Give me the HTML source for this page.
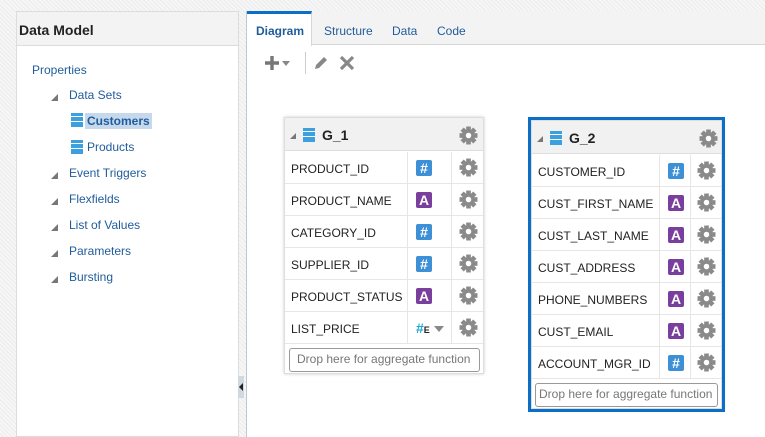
<!DOCTYPE html><html><head><style>
*{box-sizing:border-box;margin:0;padding:0}
body{width:765px;height:437px;overflow:hidden;font-family:"Liberation Sans",sans-serif;font-size:12px;position:relative;background:#f2f2f2;background-image:repeating-linear-gradient(45deg,#f6f6f6 0 2px,#ececec 2px 3px)}
.a{position:absolute}
#left{left:16px;top:11px;width:223px;height:426px;background:#fff;border:1px solid #dcdcdc}
#lh{height:34px;background:#f3f3f3;border-bottom:1px solid #dcdcdc;font-weight:bold;font-size:14px;color:#222;padding:10px 0 0 2px}
.lk{color:#1f5c9b;font-size:12px}
.tri{width:0;height:0;border-left:7px solid transparent;border-bottom:7px solid #777}
.db{width:12px;height:14px;background:linear-gradient(#3ba0de 0 3px,#fff 3px 4px,#3ba0de 4px 8px,#fff 8px 9px,#3ba0de 9px)}
#right{left:246px;top:11px;width:519px;height:426px;background:#fff;border-left:1px solid #b8c8de}
#tabs{height:34px;background:#f3f3f3;border-bottom:1px solid #d6d6d6;position:relative}
.tab{position:absolute;top:13px;color:#1f5c9b;font-size:12px}
.grp{position:absolute;background:#fff;border:1px solid #ddd;box-shadow:0 0 3px #ccc}
.gh{position:absolute;left:0;right:0;top:0;height:33px;background:#f1f1f1;border-bottom:1px solid #ddd}
.gh b{position:absolute;left:37px;top:9px;font-size:14px;color:#222}
.row{position:absolute;left:0;right:0;height:32px;border-bottom:1px solid #e6e6e6}
.row span{position:absolute;left:6px;top:10px;font-size:12px;color:#222}
.c1,.c2{position:absolute;top:0;bottom:0;border-left:1px solid #e6e6e6}
.ic{position:absolute;top:8px;width:16px;height:16px;border-radius:2px;color:#fff;font-weight:bold;font-size:14px;line-height:16px;text-align:center}
.n{background:#3d8fd6}.t{background:#7a3f9d}
.gear{position:absolute;width:19px;height:19px}
.drop{position:absolute;border:1px solid #999;border-radius:3px;color:#777;font-size:12px;padding:3px 0 0 7px;height:24px;white-space:nowrap;overflow:hidden}
</style></head><body>
<svg width="0" height="0" style="position:absolute"><defs><symbol id="g" viewBox="0 0 18 18"><g fill="#8a8a8a"><circle cx="9" cy="9" r="6"/><rect x="6.8" y="0.5" width="4.4" height="17"/><rect x="0.5" y="6.8" width="17" height="4.4"/><rect x="6.8" y="0.5" width="4.4" height="17" transform="rotate(45 9 9)"/><rect x="6.8" y="0.5" width="4.4" height="17" transform="rotate(-45 9 9)"/></g><circle cx="9" cy="9" r="2.6" fill="#fff"/></symbol></defs></svg>
<div id="left" class="a"><div id="lh">Data Model</div>
<div class="a lk" style="left:15px;top:51px">Properties</div>
<div class="a tri" style="left:34px;top:82px"></div><div class="a lk" style="left:52px;top:76px">Data Sets</div>
<div class="a db" style="left:54px;top:101px"></div><div class="a" style="left:68px;top:101px;background:#c6d9ec;color:#1f5c9b;font-weight:bold;padding:1px 2px">Customers</div>
<div class="a db" style="left:54px;top:128px"></div><div class="a lk" style="left:70px;top:128px">Products</div>
<div class="a tri" style="left:34px;top:160px"></div><div class="a lk" style="left:52px;top:154px">Event Triggers</div>
<div class="a tri" style="left:34px;top:186px"></div><div class="a lk" style="left:52px;top:180px">Flexfields</div>
<div class="a tri" style="left:34px;top:212px"></div><div class="a lk" style="left:52px;top:206px">List of Values</div>
<div class="a tri" style="left:34px;top:238px"></div><div class="a lk" style="left:52px;top:232px">Parameters</div>
<div class="a tri" style="left:34px;top:264px"></div><div class="a lk" style="left:52px;top:258px">Bursting</div>
</div>
<div class="a" style="left:238px;top:376px;width:6px;height:22px;background:#d0d8e0"></div>
<div class="a" style="left:239px;top:383px;border-right:4px solid #222;border-top:4px solid transparent;border-bottom:4px solid transparent"></div>
<div id="right" class="a"><div id="tabs">
<div class="a" style="left:0;top:0;width:65px;height:35px;background:#fff;border-top:3px solid #0b6fc7;border-right:1px solid #d6d6d6"></div>
<div class="tab" style="left:9px;font-weight:bold;color:#1f5c9b">Diagram</div>
<div class="tab" style="left:77px">Structure</div><div class="tab" style="left:145px">Data</div><div class="tab" style="left:190px">Code</div></div>
<svg class="a" style="left:17px;top:44px" width="16" height="16"><path d="M8 1 V15 M1 8 H15" stroke="#777" stroke-width="3.4"/></svg>
<div class="a" style="left:35px;top:50px;border-top:5px solid #888;border-left:4px solid transparent;border-right:4px solid transparent"></div>
<div class="a" style="left:58px;top:41px;width:1px;height:22px;background:#ccc"></div>
<svg class="a" style="left:66px;top:44px" width="16" height="16"><path d="M2 14 L3 10 L11 2 L14 5 L6 13 Z" fill="#888"/></svg>
<svg class="a" style="left:92px;top:44px" width="16" height="16"><path d="M2 2 L14 14 M14 2 L2 14" stroke="#888" stroke-width="3.2"/></svg>
</div>
<!-- G_1 -->
<div class="grp" style="left:284px;top:117px;width:200px;height:257px">
<div class="gh"><div class="a tri" style="left:5px;top:15px;border-left-width:6px;border-bottom-width:6px"></div><div class="a db" style="left:18px;top:10px"></div><b>G_1</b><svg class="gear" style="left:174px;top:8px"><use href="#g"/></svg></div>
<div class="row" style="top:34px"><span>PRODUCT_ID</span><div class="c1" style="left:122px"><div class="ic n" style="left:8px">#</div></div><div class="c2" style="left:166px"><svg class="gear" style="left:7px;top:6px"><use href="#g"/></svg></div></div>
<div class="row" style="top:66px"><span>PRODUCT_NAME</span><div class="c1" style="left:122px"><div class="ic t" style="left:8px">A</div></div><div class="c2" style="left:166px"><svg class="gear" style="left:7px;top:6px"><use href="#g"/></svg></div></div>
<div class="row" style="top:98px"><span>CATEGORY_ID</span><div class="c1" style="left:122px"><div class="ic n" style="left:8px">#</div></div><div class="c2" style="left:166px"><svg class="gear" style="left:7px;top:6px"><use href="#g"/></svg></div></div>
<div class="row" style="top:130px"><span>SUPPLIER_ID</span><div class="c1" style="left:122px"><div class="ic n" style="left:8px">#</div></div><div class="c2" style="left:166px"><svg class="gear" style="left:7px;top:6px"><use href="#g"/></svg></div></div>
<div class="row" style="top:162px"><span>PRODUCT_STATUS</span><div class="c1" style="left:122px"><div class="ic t" style="left:8px">A</div></div><div class="c2" style="left:166px"><svg class="gear" style="left:7px;top:6px"><use href="#g"/></svg></div></div>
<div class="row" style="top:194px"><span>LIST_PRICE</span><div class="c1" style="left:122px"><div class="a" style="left:8px;top:8px;color:#1aa6d8;font-weight:bold;font-size:14px">#<span style="position:static;font-size:9px">E</span></div><div class="a" style="left:26px;top:14px;border-top:6px solid #888;border-left:5px solid transparent;border-right:5px solid transparent"></div></div><div class="c2" style="left:166px"><svg class="gear" style="left:7px;top:6px"><use href="#g"/></svg></div></div>
<div class="drop" style="left:4px;top:230px;width:191px">Drop here for aggregate function</div>
</div>
<!-- G_2 -->
<div class="a" style="left:528px;top:117px;width:197px;height:295px;border:3px solid #0b6fc7;background:#fff">
<div class="grp" style="left:0;top:0;width:191px;height:289px;box-shadow:none">
<div class="gh"><div class="a tri" style="left:5px;top:15px;border-left-width:6px;border-bottom-width:6px"></div><div class="a db" style="left:18px;top:10px"></div><b>G_2</b><svg class="gear" style="left:167px;top:8px"><use href="#g"/></svg></div>
<div class="row" style="top:34px"><span>CUSTOMER_ID</span><div class="c1" style="left:127px"><div class="ic n" style="left:8px">#</div></div><div class="c2" style="left:158px"><svg class="gear" style="left:6px;top:6px"><use href="#g"/></svg></div></div>
<div class="row" style="top:66px"><span>CUST_FIRST_NAME</span><div class="c1" style="left:127px"><div class="ic t" style="left:8px">A</div></div><div class="c2" style="left:158px"><svg class="gear" style="left:6px;top:6px"><use href="#g"/></svg></div></div>
<div class="row" style="top:98px"><span>CUST_LAST_NAME</span><div class="c1" style="left:127px"><div class="ic t" style="left:8px">A</div></div><div class="c2" style="left:158px"><svg class="gear" style="left:6px;top:6px"><use href="#g"/></svg></div></div>
<div class="row" style="top:130px"><span>CUST_ADDRESS</span><div class="c1" style="left:127px"><div class="ic t" style="left:8px">A</div></div><div class="c2" style="left:158px"><svg class="gear" style="left:6px;top:6px"><use href="#g"/></svg></div></div>
<div class="row" style="top:162px"><span>PHONE_NUMBERS</span><div class="c1" style="left:127px"><div class="ic t" style="left:8px">A</div></div><div class="c2" style="left:158px"><svg class="gear" style="left:6px;top:6px"><use href="#g"/></svg></div></div>
<div class="row" style="top:194px"><span>CUST_EMAIL</span><div class="c1" style="left:127px"><div class="ic t" style="left:8px">A</div></div><div class="c2" style="left:158px"><svg class="gear" style="left:6px;top:6px"><use href="#g"/></svg></div></div>
<div class="row" style="top:226px"><span>ACCOUNT_MGR_ID</span><div class="c1" style="left:127px"><div class="ic n" style="left:8px">#</div></div><div class="c2" style="left:158px"><svg class="gear" style="left:6px;top:6px"><use href="#g"/></svg></div></div>
<div class="drop" style="left:3px;top:262px;width:183px;padding-left:3px">Drop here for aggregate function</div>
</div></div>
</body></html>
